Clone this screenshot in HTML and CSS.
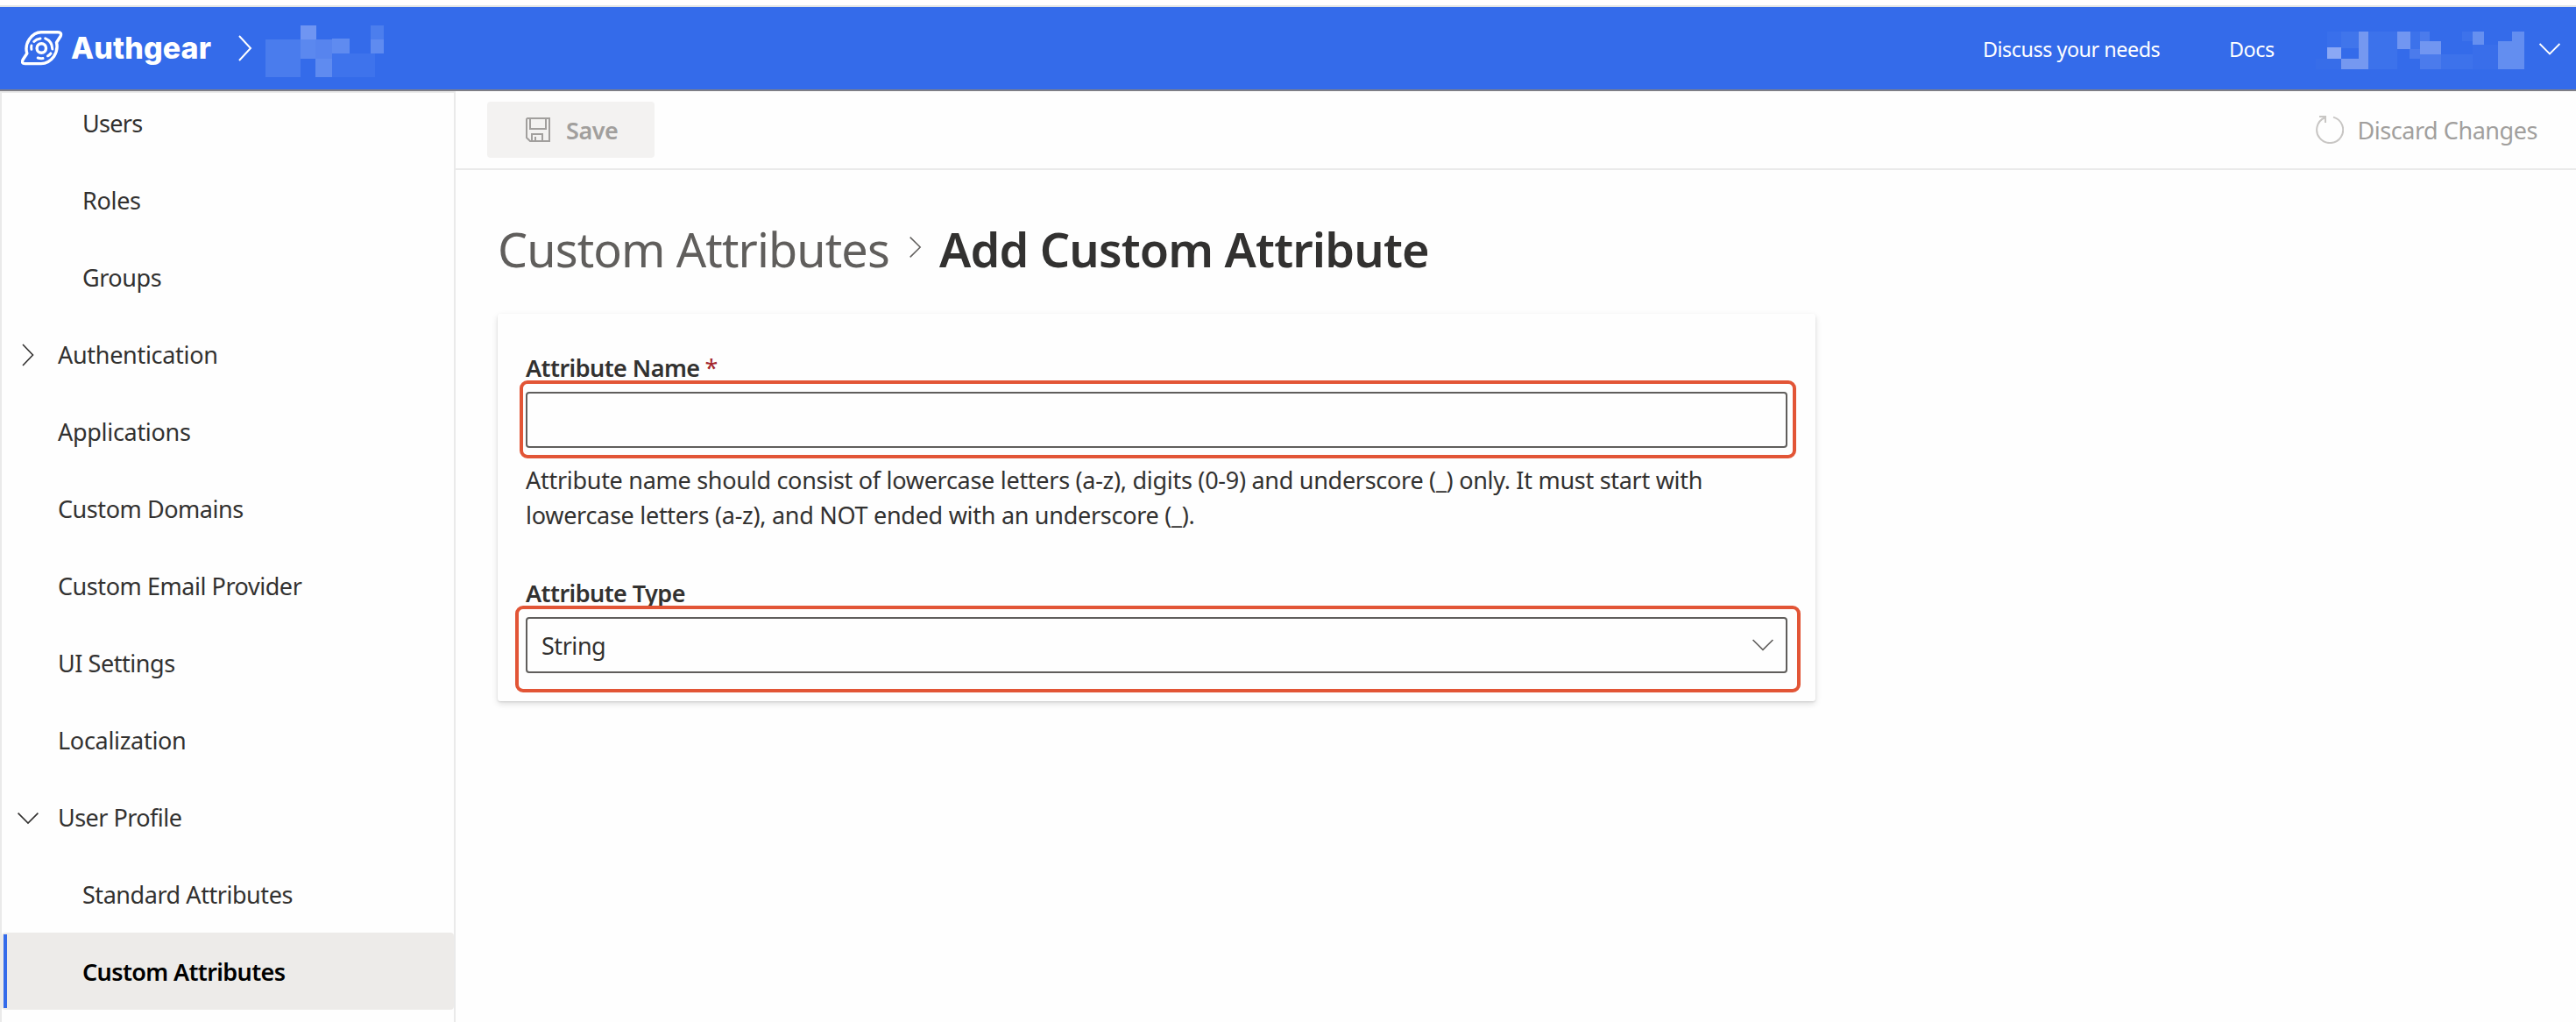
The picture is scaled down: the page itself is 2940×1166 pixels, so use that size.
FILE: index.html
```html
<!DOCTYPE html>
<html lang="en">
<head>
<meta charset="utf-8">
<title>Add Custom Attribute - Authgear</title>
<link rel="stylesheet" href="styles.css">
</head>
<body>
<header class="header">
  <svg class="logo" width="50" height="42" viewBox="0 0 50 42" fill="none" stroke="#fff" stroke-linecap="round" stroke-linejoin="round">
    <path stroke-width="3.4" d="M23 2.700H42Q47 2.700 45 7.500L40.500 14.500Q42.500 23 37.500 30.500Q31.500 38.600 23 38.600H4.500Q0 38.600 2.200 34L6.800 27Q4.300 18.500 9.500 10.800Q15 2.700 23 2.700Z"/>
    <circle cx="23.300" cy="21" r="5.200" stroke-width="3.400"/>
    <path stroke-width="3" d="M27.700 9.900Q35.500 13 35.800 22M14.700 13.500Q17.500 10.500 22 9.900M11.900 18Q11.400 20 11.900 22.300M19.200 32Q22 33 25 32.600M30.500 29.800Q32.800 28.800 34 26.900"/>
  </svg>
  <span class="brand">Authgear</span>
  <svg class="crumb" width="16" height="30" viewBox="0 0 16 30" fill="none" stroke="#fff" stroke-width="2"><path d="M1 1L14 15L1 29"/></svg>
  <svg class="mosaic-app" width="135" height="59" viewBox="303 29 135 59" shape-rendering="crispEdges">
    <path fill="#4a7ced" d="M303 45h40v43h-40z"/><path fill="#6f95f2" d="M343 29h18v16h-18z"/>
    <path fill="#5b88ef" d="M343 45h17v22h-17z"/><path fill="#5784ee" d="M360 45h19v22h-19z"/>
    <path fill="#5f8bf0" d="M360 67h19v21h-19zM379 44h20v17h-20zM423 45h15v16h-15z"/>
    <path fill="#3e73ec" d="M379 61h49v27h-49z"/><path fill="#4c7eed" d="M423 29h15v16h-15z"/>
  </svg>
  <nav class="header-links">
    <a class="link-needs">Discuss your needs</a>
    <a class="link-docs">Docs</a>
  </nav>
  <svg class="mosaic-user" width="238" height="43" viewBox="70 48 714 129" shape-rendering="crispEdges">
    <path fill="#376de9" d="M70 142h86v35h-86z"/><path fill="#396feb" d="M108 48h48v54h-48z"/>
    <path fill="#4075eb" d="M156 48h60v57h-60z"/><path fill="#3c72eb" d="M249 48h99v129h-99zM393 48h33v60h-33z"/>
    <path fill="#7598f0" d="M216 48h33v129h-93v-36h60z"/><path fill="#8ba8f5" d="M108 102h48v39h-48z"/>
    <path fill="#7196f1" d="M348 48h45v60h-45zM426 81h72v45h-72z"/>
    <path fill="#4b7bec" d="M426 48h33v33h-33zM390 108h36v33h-36zM426 126h72v51h-72z"/>
    <path fill="#3d72eb" d="M498 126h108v51h-108zM570 48h36v33h-36z"/>
    <path fill="#396eea" d="M606 93h87v84h-87z"/><path fill="#6690f0" d="M606 48h39v45h-39z"/>
    <path fill="#638ef0" d="M693 81h48v-33h42v129h-90z"/>
  </svg>
  <svg class="user-chevron" width="24" height="14" viewBox="0 0 24 14" fill="none" stroke="#fff" stroke-width="1.800"><path d="M.600 1L12 12.400L23.400 1"/></svg>
</header>
<div class="layout">
  <aside class="sidebar">
    <a class="nav child users">Users</a>
    <a class="nav child roles">Roles</a>
    <a class="nav child groups">Groups</a>
    <a class="nav auth"><svg class="chev" width="24" height="26" viewBox="0 0 24 26"><path d="M6 1L17.500 13L6 25"/></svg>Authentication</a>
    <a class="nav apps">Applications</a>
    <a class="nav domains">Custom Domains</a>
    <a class="nav email">Custom Email Provider</a>
    <a class="nav ui">UI Settings</a>
    <a class="nav local">Localization</a>
    <a class="nav profile"><svg class="chev" width="24" height="26" viewBox="0 0 24 26"><path d="M.600 7.600L12 19L23.400 7.600"/></svg>User Profile</a>
    <a class="nav child standard">Standard Attributes</a>
    <a class="nav child selected">Custom Attributes</a>
  </aside>
  <main class="main">
    <div class="toolbar">
      <button class="save" disabled>
        <svg width="28" height="28" viewBox="0 0 28 28" fill="none" stroke="#a19f9d" stroke-width="2"><path d="M2 1H27V27H5L1 23V2ZM5 1V13H23V1M7 27V19H19V27M11 22V27"/></svg>
        <span class="save-text">Save</span>
      </button>
      <button class="discard" disabled>
        <svg width="32" height="32" viewBox="0 0 32 32" fill="none" stroke="#c8c6c4" stroke-width="2"><path d="M20 1.600A15 15 0 1 1 10.500 2.200"/><path d="M4 1H11V8"/></svg>
        <span class="discard-text">Discard Changes</span>
      </button>
    </div>
    <div class="content">
      <h1 class="title">
        <span class="parent">Custom Attributes</span>
        <svg width="14" height="24" viewBox="0 0 14 24" fill="none" stroke="#605e5c" stroke-width="1.500"><path d="M.700 .600L12.200 12L.700 23.400"/></svg>
        <span class="current">Add Custom Attribute</span>
      </h1>
      <section class="card">
        <label class="label"><span class="label-name">Attribute Name</span><span class="required">*</span></label>
        <div class="control"><div class="mark mark-name"></div></div>
        <p class="help">Attribute name should consist of lowercase letters (a-z), digits (0-9) and underscore (_) only. It must start with<br>lowercase letters (a-z), and NOT ended with an underscore (_).</p>
        <label class="label"><span class="label-type">Attribute Type</span></label>
        <div class="control select">
          <span class="value">String</span>
          <svg width="24" height="14" viewBox="0 0 24 14" fill="none" stroke="#605e5c" stroke-width="1.600"><path d="M.600 1L12 12.400L23.400 1"/></svg>
          <div class="mark mark-type"></div>
        </div>
      </section>
    </div>
  </main>
</div>
</body>
</html>
```
FILE: styles.css
```css
* { box-sizing: border-box; }
body {
  margin: 0;
  height: 1166px;
  overflow: hidden;
  display: flex;
  flex-direction: column;
  padding-top: 6px;
  background: #fefefe;
  color: #323130;
  font-family: "Noto Sans", "Open Sans", sans-serif;
  font-size: 27px;
  letter-spacing: -.45px;
}
svg { display: block; flex: none; }
button { border: 0; padding: 0; font: inherit; letter-spacing: inherit; }
.header {
  flex: none;
  height: 98px;
  display: flex;
  align-items: flex-start;
  background: #346bea;
  border-top: 2px solid #e1e5e5;
  border-bottom: 2px solid #7f7f86;
  color: #fff;
  font-size: 23.3px;
  line-height: 34px;
  white-space: nowrap;
}
.logo { margin: 26px 0 0 24px; }
.brand {
  margin: 26px 0 0 7px;
  width: 191px;
  font-family: Inter, sans-serif;
  font-weight: 800;
  font-size: 34px;
  letter-spacing: .1px;
  line-height: 42px;
}
.crumb { margin-top: 32px; }
.mosaic-app { margin: 21px 0 0 15px; }
.header-links { display: flex; margin: 31px 0 0 auto; }
.link-needs { width: 281px; letter-spacing: -.45px; }
.link-docs { width: 99px; }
.mosaic-user { margin-top: 28px; }
.user-chevron { margin: 41px 18px 0 17px; }
.layout { flex: 1; display: flex; min-height: 0; }
.sidebar {
  flex: none;
  width: 520px;
  border: 2px solid #eaeaea;
  border-bottom: 0;
  overflow: hidden;
}
.nav {
  position: relative;
  display: flex;
  align-items: center;
  height: 88px;
  padding-top: 1px;
  padding-left: 64px;
  white-space: nowrap;
}
.nav:has(.chev) { padding-left: 18px; gap: 22px; }
.child { padding-left: 92px; }
.users { margin-top: -10px; letter-spacing: -.7px; }
.roles, .auth, .apps, .local { letter-spacing: -.3px; }
.profile { letter-spacing: -.53px; }
.chev { fill: none; stroke: #323130; stroke-width: 1.6; }
.selected {
  background: #edebe9;
  border-radius: 4px;
  color: #000;
  font-weight: 600;
  letter-spacing: -.62px;
}
.selected::before {
  content: "";
  position: absolute;
  left: 2px;
  top: 2px;
  bottom: 2px;
  width: 4px;
  background: #346bea;
}
.main { flex: 1; }
.toolbar {
  height: 90px;
  display: flex;
  justify-content: space-between;
  align-items: flex-start;
  padding: 12px 44px 0 36px;
  border-bottom: 2px solid #eaeaea;
}
.save {
  width: 191px;
  height: 64px;
  display: flex;
  align-items: center;
  padding-left: 44px;
  gap: 18px;
  background: #f3f2f1;
  border-radius: 4px;
  color: #a19f9d;
  font-weight: 600;
}
.save-text, .discard-text { padding-top: 1px; }
.discard {
  height: 64px;
  display: flex;
  align-items: center;
  gap: 15px;
  background: none;
  color: #a19f9d;
}
.content { padding: 51px 48px; }
.title {
  margin: 0;
  height: 113px;
  display: flex;
  align-items: flex-start;
  font-size: 54px;
  line-height: 78px;
  font-weight: 600;
  letter-spacing: -.82px;
  white-space: nowrap;
}
.title svg { margin: 25px 20px 0 0; }
.parent { width: 470px; color: #605e5c; font-weight: 400; letter-spacing: -.9px; }
.card {
  width: 1504px;
  height: 442px;
  padding: 40px 32px;
  border-radius: 3px;
  box-shadow: 0 3px 7px rgba(0, 0, 0, .132), 0 1px 2px rgba(0, 0, 0, .108);
}
.label {
  display: flex;
  gap: 6px;
  height: 49px;
  line-height: 43px;
  font-weight: 600;
  letter-spacing: -.55px;
}
.required { color: #a4262c; font-weight: 400; }
.control {
  position: relative;
  height: 64px;
  border: 2px solid #605e5c;
  border-radius: 4px;
}
.select {
  display: flex;
  align-items: center;
  justify-content: space-between;
  padding: 0 14px 0 16px;
}
.mark {
  position: absolute;
  border: 4px solid #e25536;
  border-radius: 9px;
}
.mark-name { left: -9px; right: -12px; top: -15px; bottom: -14px; }
.mark-type { left: -14px; right: -17px; top: -15px; bottom: -24px; }
.help {
  margin: 0;
  height: 144px;
  padding-top: 17px;
  line-height: 40px;
  letter-spacing: -.285px;
  white-space: nowrap;
}
```
